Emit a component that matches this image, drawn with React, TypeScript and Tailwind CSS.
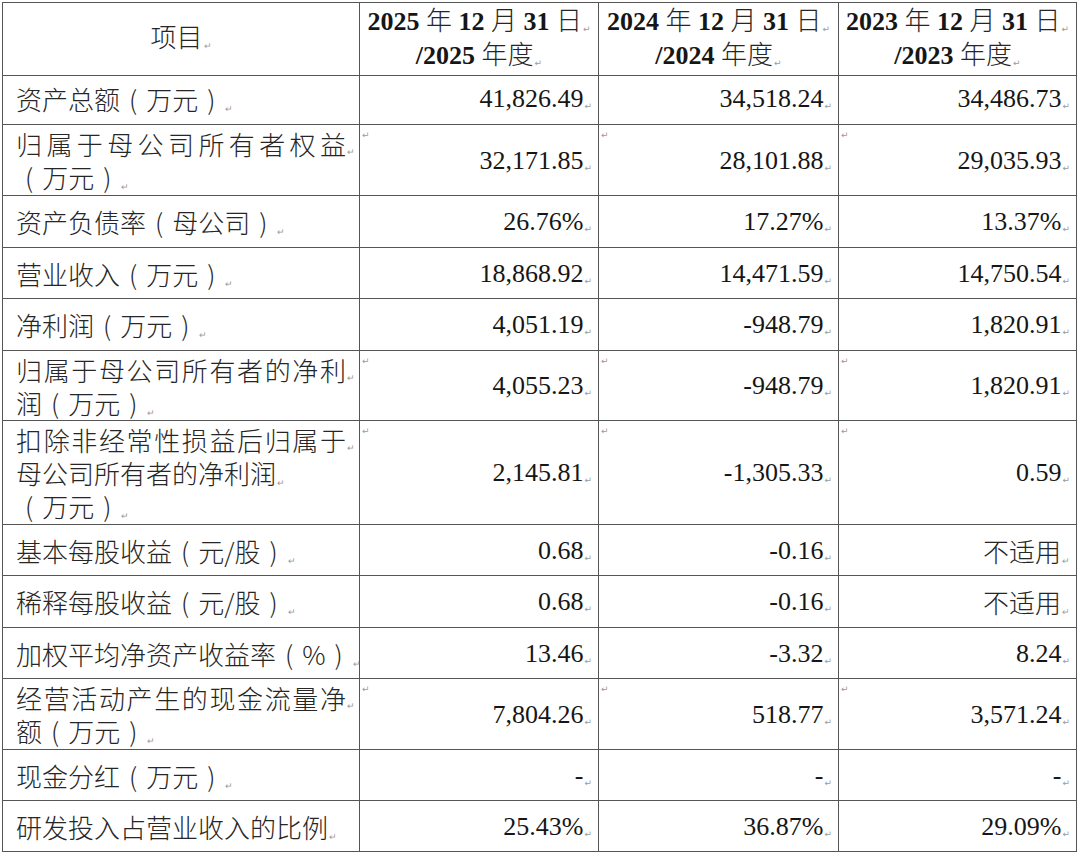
import React from 'react';

/**
 * Financial summary table, Word-style, with paragraph marks shown.
 */

type Line = { t: string; j?: boolean };

interface Row {
  h: string;
  label: Line[];
  values: string[];
  multi?: boolean;
}

const rows: Row[] = [
  { h: 'h-[52px]', label: [{ t: '资产总额（万元）' }], values: ['41,826.49', '34,518.24', '34,486.73'] },
  {
    h: 'h-[71px]',
    label: [{ t: '归属于母公司所有者权益', j: true }, { t: '（万元）' }],
    values: ['32,171.85', '28,101.88', '29,035.93'],
    multi: true,
  },
  { h: 'h-[52px]', label: [{ t: '资产负债率（母公司）' }], values: ['26.76%', '17.27%', '13.37%'] },
  { h: 'h-[51px]', label: [{ t: '营业收入（万元）' }], values: ['18,868.92', '14,471.59', '14,750.54'] },
  { h: 'h-[52px]', label: [{ t: '净利润（万元）' }], values: ['4,051.19', '-948.79', '1,820.91'] },
  {
    h: 'h-[70px]',
    label: [{ t: '归属于母公司所有者的净利', j: true }, { t: '润（万元）' }],
    values: ['4,055.23', '-948.79', '1,820.91'],
    multi: true,
  },
  {
    h: 'h-[104px]',
    label: [{ t: '扣除非经常性损益后归属于', j: true }, { t: '母公司所有者的净利润' }, { t: '（万元）' }],
    values: ['2,145.81', '-1,305.33', '0.59'],
    multi: true,
  },
  { h: 'h-[51px]', label: [{ t: '基本每股收益（元/股）' }], values: ['0.68', '-0.16', '不适用'] },
  { h: 'h-[52px]', label: [{ t: '稀释每股收益（元/股）' }], values: ['0.68', '-0.16', '不适用'] },
  { h: 'h-[51px]', label: [{ t: '加权平均净资产收益率（%）' }], values: ['13.46', '-3.32', '8.24'] },
  {
    h: 'h-[71px]',
    label: [{ t: '经营活动产生的现金流量净', j: true }, { t: '额（万元）' }],
    values: ['7,804.26', '518.77', '3,571.24'],
    multi: true,
  },
  { h: 'h-[51px]', label: [{ t: '现金分红（万元）' }], values: ['-', '-', '-'] },
  { h: 'h-[51px]', label: [{ t: '研发投入占营业收入的比例' }], values: ['25.43%', '36.87%', '29.09%'] },
];

const years = ['2025', '2024', '2023'];

// Word's paragraph mark
function Mark() {
  return (
    <span className="ml-[1px] align-[-2px] text-[9px] leading-none text-[#9a9a9a] font-['DejaVu_Sans',sans-serif]">
      ↵
    </span>
  );
}

// full-width brackets look centred in the document font
function CnText({ t }: { t: string }) {
  return (
    <>
      {t.split(/([（）])/).map((part, i) =>
        part === '（' || part === '）' ? (
          <span key={i} className="mx-[9px]">
            {part === '（' ? '(' : ')'}
          </span>
        ) : (
          <React.Fragment key={i}>{part}</React.Fragment>
        ),
      )}
    </>
  );
}

const cell = 'border-r border-b border-[#555555]';
const cn = "font-['Noto_Sans_CJK_SC',sans-serif] font-light text-[#262626]";
const num = "font-['Liberation_Serif','Noto_Sans_CJK_SC',serif] text-[#161616]";

export default function App() {
  return (
    <div className="min-h-screen bg-white pl-[2px] pt-[2px]">
      <div className="w-[1075px] border-l border-t border-[#555555] text-[26px]">
        {/* Header */}
        <div className="grid h-[70px] grid-cols-[357px_239px_240px_238px]">
          <div className={`${cell} ${cn} flex items-center justify-center pb-[8px]`}>
            <span>
              项目
              <Mark />
            </span>
          </div>
          {years.map((y) => (
            <div key={y} className={`${cell} ${num} flex flex-col items-center justify-center pb-[4px] leading-[31px]`}>
              <div className="whitespace-nowrap">
                <b>{y}</b> <span className={cn}>年</span> <b>12</b> <span className={cn}>月</span> <b>31</b>{' '}
                <span className={cn}>日</span>
                <Mark />
              </div>
              <div className="whitespace-nowrap">
                <b>/{y}</b> <span className={cn}>年度</span>
                <Mark />
              </div>
            </div>
          ))}
        </div>

        {/* Body */}
        {rows.map((row, i) => (
          <div key={i} className={`grid grid-cols-[357px_239px_240px_238px] ${row.h}`}>
            <div className={`${cell} ${cn} flex flex-col justify-center pl-[13px] leading-[33px]`}>
              {row.label.map((line, k) =>
                line.j ? (
                  <div key={k} className="flex items-baseline">
                    <span className="w-[330px] [text-align-last:justify]">{line.t}</span>
                    <Mark />
                  </div>
                ) : (
                  <div key={k} className="whitespace-nowrap">
                    <CnText t={line.t} />
                    <Mark />
                  </div>
                ),
              )}
            </div>
            {row.values.map((v, k) => (
              <div key={k} className={`${cell} relative flex items-center justify-end pr-[6px]`}>
                {row.multi && (
                  <span className="absolute left-[2px] top-[6px] text-[9px] leading-none text-[#9a9a9a] font-['DejaVu_Sans',sans-serif]">
                    ↵
                  </span>
                )}
                <span className={/[0-9-]/.test(v) ? num : cn}>
                  {v}
                  <Mark />
                </span>
              </div>
            ))}
          </div>
        ))}
      </div>
    </div>
  );
}
